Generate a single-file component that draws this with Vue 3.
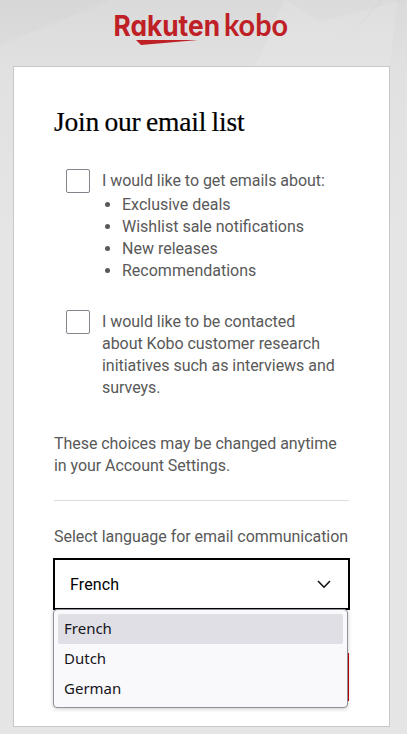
<template>
  <div class="page">
    <!-- faceted backdrop -->
    <svg class="backdrop" viewBox="0 0 407 240" preserveAspectRatio="none">
      <defs>
        <linearGradient id="shade" x1="0" y1="0" x2="0" y2="1">
          <stop offset="0" stop-color="#dadada" />
          <stop offset="0.3" stop-color="#e1e1e1" />
          <stop offset="1" stop-color="#e5e5e5" />
        </linearGradient>
      </defs>
      <rect width="407" height="240" fill="url(#shade)" />
      <path d="M0 0H112L0 45Z" fill="#000" opacity="0.012" />
      <path d="M285 0H380L350 36L255 66Z" fill="#fff" opacity="0.12" />
      <path d="M285 0L320 22L407 0Z" fill="#000" opacity="0.012" />
      <path d="M383 0H397L390 66H255L350 36Z" fill="#fff" opacity="0.12" />
    </svg>

    <header class="top">
      <svg class="logo" width="180" height="36" viewBox="0 0 180 36" role="img">
        <text class="rakuten" x="0.5" y="26.3" textLength="106.5" lengthAdjust="spacingAndGlyphs">Rakuten</text>
        <text class="kobo" x="111" y="26.3" textLength="64" lengthAdjust="spacingAndGlyphs">kobo</text>
        <path d="M23 30H85L28 35Z" fill="#bf2026" />
      </svg>
    </header>

    <main class="card">
      <h1>Join our email list</h1>

      <div class="choice">
        <input v-model="deals" type="checkbox" class="box" />
        <div class="choice-text">
          <span class="line">I would like to get emails about:</span>
          <ul>
            <li v-for="topic in topics" :key="topic">{{ topic }}</li>
          </ul>
        </div>
      </div>

      <div class="choice research">
        <input v-model="research" type="checkbox" class="box" />
        <div class="choice-text">
          I would like to be contacted<br />about Kobo customer research<br />initiatives such as interviews and<br />surveys.
        </div>
      </div>

      <p class="note">These choices may be changed anytime<br />in your Account Settings.</p>

      <hr />

      <div class="label">Select language for email communication</div>
      <div class="picker">
        <div class="select" @click="open = !open">
          <span>{{ selected }}</span>
          <svg width="14" height="9" viewBox="0 0 14 9">
            <path d="M1 1L7 7.2L13 1" fill="none" stroke="#111" stroke-width="1.6" />
          </svg>
        </div>
        <div v-if="open" class="menu">
          <div
            v-for="lang in languages"
            :key="lang"
            class="option"
            :class="{ active: lang === selected }"
            @click="choose(lang)"
          >{{ lang }}</div>
        </div>
      </div>
      <button class="submit"></button>
    </main>
  </div>
</template>

<script setup>
import { ref } from 'vue'

const topics = ['Exclusive deals', 'Wishlist sale notifications', 'New releases', 'Recommendations']
const languages = ['French', 'Dutch', 'German']

const deals = ref(false)
const research = ref(false)
const selected = ref('French')
const open = ref(true)

const choose = (lang) => {
  selected.value = lang
  open.value = false
}
</script>

<style>
body {
  margin: 0;
  background: #e5e5e5;
}
</style>

<style scoped>
.page {
  position: relative;
  box-sizing: border-box;
  width: 407px;
  height: 734px;
  overflow: hidden;
  background: #e5e5e5;
  color: #595959;
  font-family: Roboto, 'Liberation Sans', sans-serif;
  font-size: 16px;
  line-height: 22px;
}
.backdrop {
  position: absolute;
  top: 0;
  left: 0;
  width: 407px;
  height: 240px;
}
.top {
  position: relative;
  box-sizing: border-box;
  height: 66px;
  padding: 10px 0 0 113px;
}
.logo {
  display: block;
  overflow: visible;
}
.logo text {
  fill: #bf2026;
}
.rakuten {
  font-family: Inter, sans-serif;
  font-size: 29px;
  font-weight: 700;
  font-feature-settings: 'cv11';
}
.kobo {
  font-family: Lato, sans-serif;
  font-size: 31px;
  font-weight: 700;
}
.card {
  position: relative;
  box-sizing: border-box;
  width: 377px;
  height: 661px;
  margin-left: 13px;
  padding: 39px 40px 0;
  border: 1px solid #c8c8c8;
  background: #fff;
}
h1 {
  margin: 0;
  color: #000;
  font-family: 'Liberation Serif', serif;
  font-size: 27.5px;
  font-weight: 400;
  letter-spacing: -0.2px;
  line-height: 32px;
  white-space: nowrap;
  word-spacing: -1.2px;
  -webkit-text-stroke: 0.2px #000;
}
.choice {
  display: flex;
  margin-top: 31px;
  padding-left: 12px;
}
.box {
  flex: none;
  appearance: none;
  box-sizing: border-box;
  width: 24px;
  height: 24px;
  margin: 0 12px 0 0;
  border: 1px solid #85838b;
  border-radius: 2px;
  background: #fff;
}
.choice-text {
  padding-top: 1px;
  letter-spacing: -0.04px;
  white-space: nowrap;
}
.line {
  display: block;
}
ul {
  margin: 2px 0 0;
  padding-left: 20px;
}
li {
  letter-spacing: 0;
}
.research {
  margin-top: 28px;
}
.note {
  margin: 34px 0 0;
  letter-spacing: -0.05px;
  white-space: nowrap;
}
hr {
  height: 1px;
  margin: 23px 0 0;
  border: 0;
  background: #dcdcdc;
}
.label {
  margin-top: 25px;
  letter-spacing: -0.04px;
  white-space: nowrap;
}
.picker {
  position: relative;
  margin-top: 10px;
}
.select {
  display: flex;
  box-sizing: border-box;
  align-items: center;
  justify-content: space-between;
  width: 297px;
  height: 52px;
  margin-left: -1px;
  padding: 0 17px 0 15px;
  border: 2px solid #000;
  background: #fff;
  color: #000;
}
.select span {
  padding-top: 2px;
  letter-spacing: 0.15px;
}
.menu {
  position: absolute;
  z-index: 2;
  top: 51px;
  left: -1px;
  box-sizing: border-box;
  width: 295px;
  height: 99px;
  padding: 4px;
  border: 1px solid #8f8f98;
  border-radius: 4px;
  background: #f9f9fb;
  box-shadow: 0 1px 4px rgba(0, 0, 0, 0.2);
}
.option {
  box-sizing: border-box;
  height: 30px;
  padding: 0 6px;
  border-radius: 2px;
  color: #15141a;
  font-family: 'Noto Sans', sans-serif;
  font-size: 15px;
  line-height: 28px;
}
.option.active {
  background: #e0dfe6;
}
.submit {
  display: block;
  width: 295px;
  height: 48px;
  margin-top: 43px;
  padding: 0;
  border: 0;
  background: #bf0000;
}
</style>
